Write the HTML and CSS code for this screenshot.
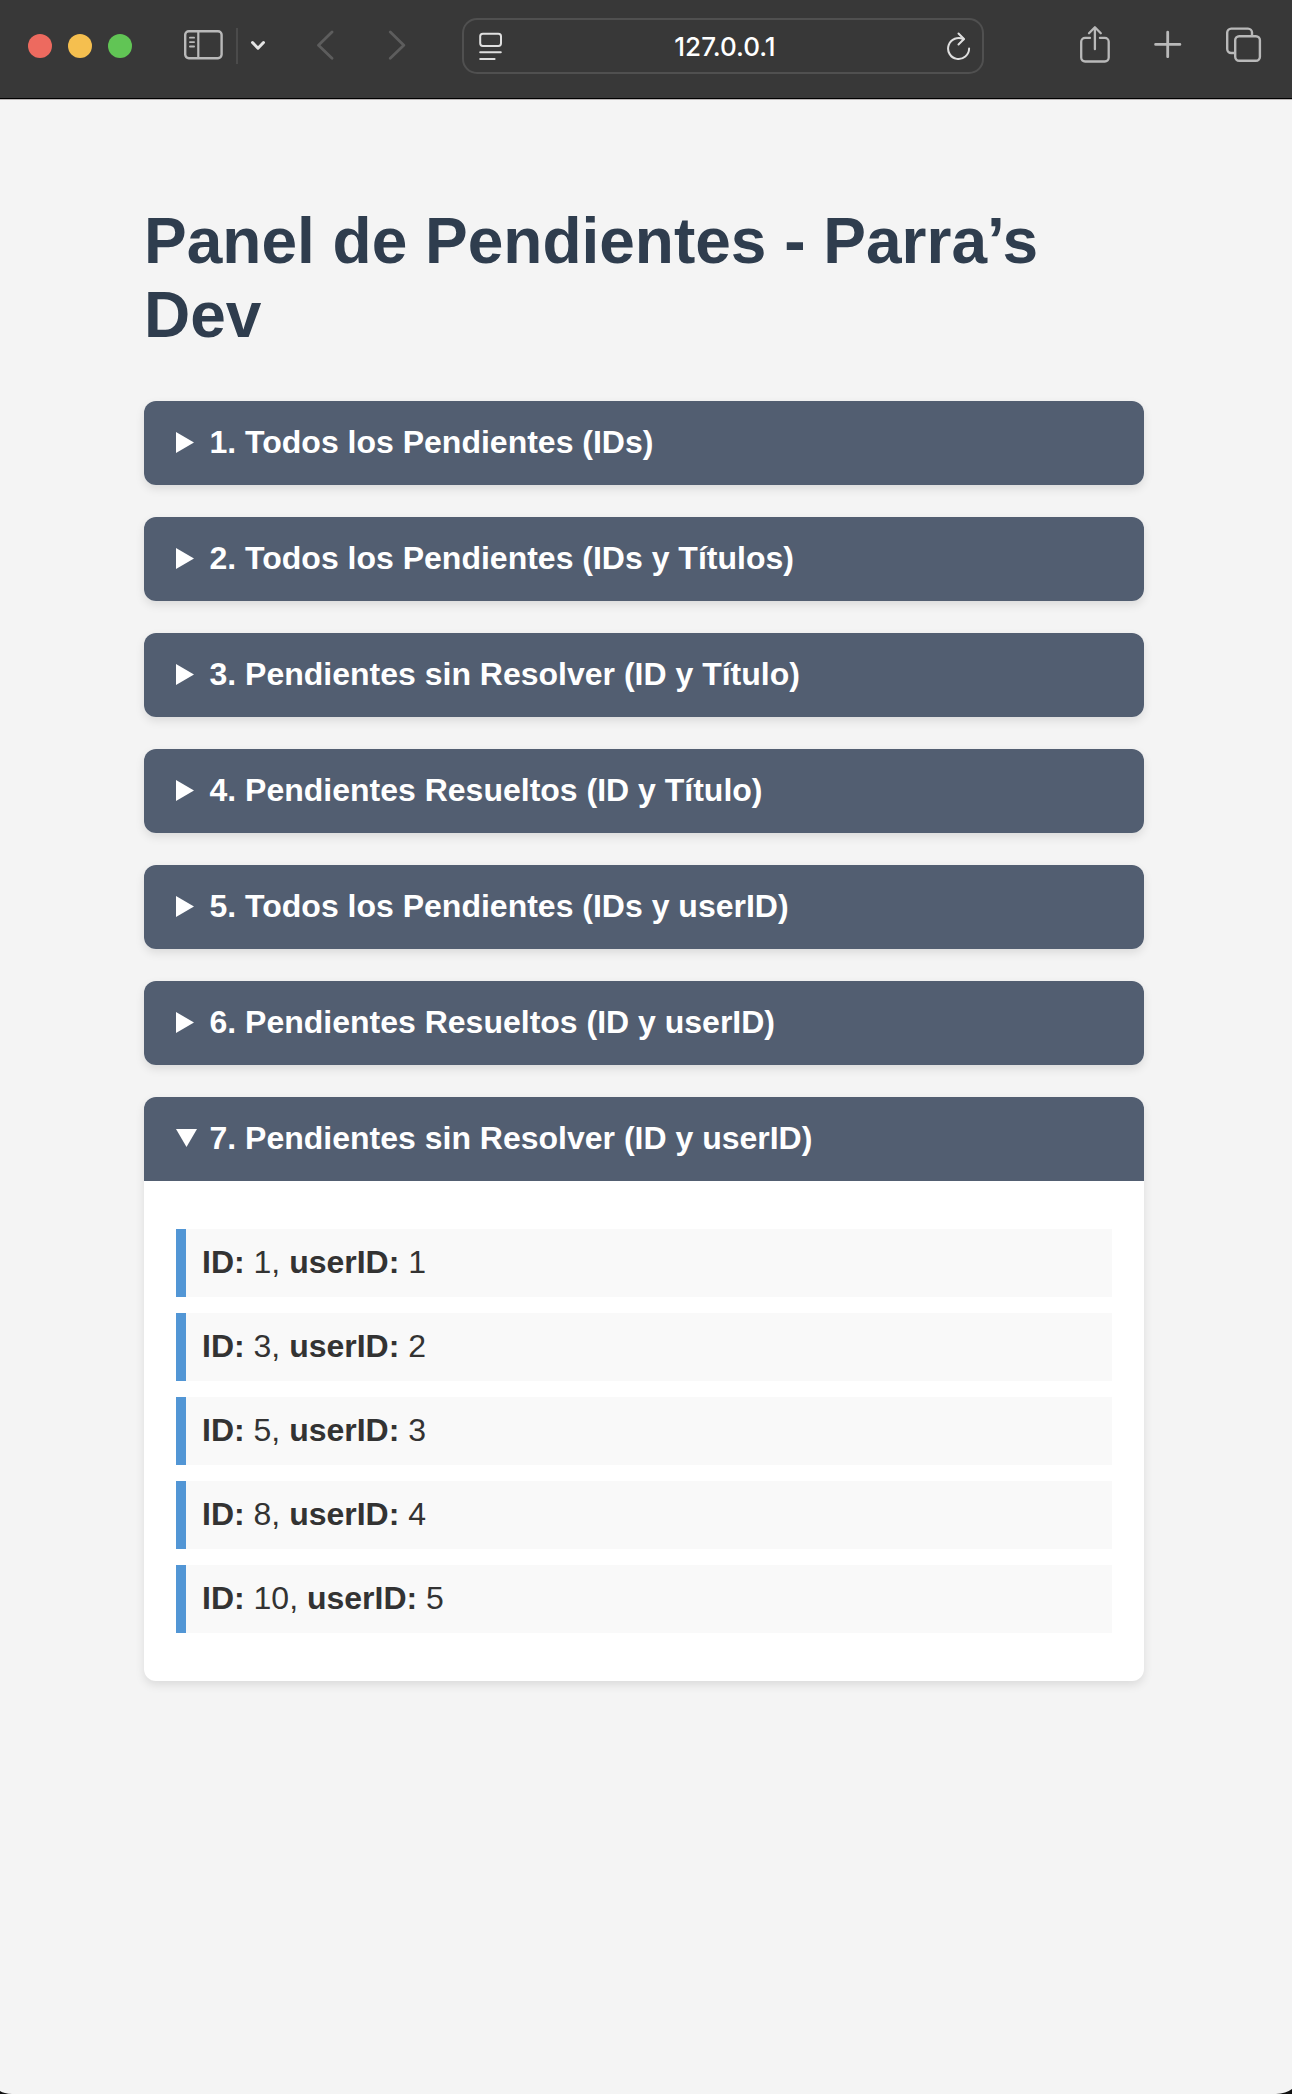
FILE: index.html
```html
<!DOCTYPE html>
<html lang="es">
<head>
<meta charset="utf-8">
<title>Panel de Pendientes</title>
<link rel="stylesheet" href="styles.css">
</head>
<body>
<header class="toolbar">
  <div class="lights"><i class="light red"></i><i class="light yellow"></i><i class="light green"></i></div>
  <svg class="sidebar-icon" width="40" height="32" viewBox="0 0 40 32" fill="none" stroke="#b9b9b9" stroke-width="2.4" stroke-linecap="round"><rect x="2.2" y="2.2" width="36.4" height="27" rx="3.6"/><path d="M15.300 2v27" stroke-width="2.2"/><path d="M6.900 8.700h4.200M6.900 13.100h4.200M6.900 17.500h4.200" stroke-width="1.8"/></svg>
  <span class="divider"></span>
  <svg class="menu-icon" width="16" height="12" viewBox="0 0 16 12" fill="none" stroke="#e4e4e4" stroke-width="3" stroke-linecap="round" stroke-linejoin="round"><path d="M2.5 2.5 8 8.200l5.500-5.700"/></svg>
  <svg class="back-icon" width="18" height="30" viewBox="0 0 18 30" fill="none" stroke="#5d5d5d" stroke-width="2.8" stroke-linecap="round" stroke-linejoin="round"><path d="M16 2 2.5 15.200 16 28.200"/></svg>
  <svg class="forward-icon" width="18" height="30" viewBox="0 0 18 30" fill="none" stroke="#5d5d5d" stroke-width="2.8" stroke-linecap="round" stroke-linejoin="round"><path d="M2.300 2l13.500 13.200L2.300 28.200"/></svg>
  <div class="address">
    <svg width="24" height="30" viewBox="0 0 24 30" fill="none" stroke="#dfdfdf" stroke-width="2" stroke-linecap="round"><rect x="1.2" y="2.700" width="20.8" height="12.200" rx="2.6"/><path d="M1.200 21.300h20.600M1.200 27.900h14.400"/></svg>
    <span class="url">127.0.0.1</span>
    <svg width="24" height="30" viewBox="0 0 24 30" fill="none" stroke="#dfdfdf" stroke-width="2" stroke-linecap="round" stroke-linejoin="round"><path d="M22.100 17.600A10.500 10.500 0 1 1 16.600 8.300"/><path d="M11.500 2.500 17 8 11.500 13.500"/></svg>
  </div>
  <svg class="share-icon" width="32" height="40" viewBox="0 0 32 40" fill="none" stroke="#b9b9b9" stroke-width="2.3" stroke-linecap="round" stroke-linejoin="round"><path d="M11 12.900H6.100A3.900 3.900 0 0 0 2.200 16.800v15.800A3.900 3.900 0 0 0 6.100 36.500h19.700a3.900 3.900 0 0 0 3.900-3.900V16.800a3.900 3.900 0 0 0-3.900-3.900h-4.900"/><path d="M15.900 24.200V2.500M10 8.200l5.900-5.900 5.900 5.900"/></svg>
  <svg class="plus-icon" width="28" height="28" viewBox="0 0 28 28" fill="none" stroke="#b9b9b9" stroke-width="2.8" stroke-linecap="round"><path d="M13.700 2.200v24.500M1.600 14.400h24.300"/></svg>
  <svg class="tabs-icon" width="36" height="36" viewBox="0 0 36 36" fill="none" stroke="#b9b9b9" stroke-width="2.4"><path d="M9 26H5.200a4 4 0 0 1-4-4V5.600a4 4 0 0 1 4-4h16.800a4 4 0 0 1 4 4V9"/><rect x="9.200" y="9.200" width="24.700" height="24.600" rx="4"/></svg>
</header>
<main class="page">
  <h1 class="title">Panel de Pendientes - Parra’s Dev</h1>
  <details class="panel"><summary class="heading"><svg class="marker" viewBox="0 0 22 22"><path d="M0 0v21l18-10.500z"/></svg>1. Todos los Pendientes (IDs)</summary></details>
  <details class="panel"><summary class="heading"><svg class="marker" viewBox="0 0 22 22"><path d="M0 0v21l18-10.500z"/></svg>2. Todos los Pendientes (IDs y Títulos)</summary></details>
  <details class="panel"><summary class="heading"><svg class="marker" viewBox="0 0 22 22"><path d="M0 0v21l18-10.500z"/></svg>3. Pendientes sin Resolver (ID y Título)</summary></details>
  <details class="panel"><summary class="heading"><svg class="marker" viewBox="0 0 22 22"><path d="M0 0v21l18-10.500z"/></svg>4. Pendientes Resueltos (ID y Título)</summary></details>
  <details class="panel"><summary class="heading"><svg class="marker" viewBox="0 0 22 22"><path d="M0 0v21l18-10.500z"/></svg>5. Todos los Pendientes (IDs y userID)</summary></details>
  <details class="panel"><summary class="heading"><svg class="marker" viewBox="0 0 22 22"><path d="M0 0v21l18-10.500z"/></svg>6. Pendientes Resueltos (ID y userID)</summary></details>
  <details class="panel" open><summary class="heading"><svg class="marker" viewBox="0 0 22 22"><path d="M0 1h21L10.500 19z"/></svg>7. Pendientes sin Resolver (ID y userID)</summary>
    <ul class="items">
      <li class="item"><strong>ID:</strong> 1, <strong>userID:</strong> 1</li>
      <li class="item"><strong>ID:</strong> 3, <strong>userID:</strong> 2</li>
      <li class="item"><strong>ID:</strong> 5, <strong>userID:</strong> 3</li>
      <li class="item"><strong>ID:</strong> 8, <strong>userID:</strong> 4</li>
      <li class="item"><strong>ID:</strong> 10, <strong>userID:</strong> 5</li>
    </ul>
  </details>
</main>
<svg class="corner left" width="12" height="3" viewBox="0 0 12 3"><path d="M0 0Q4 2.500 12 3H0z"/></svg>
<svg class="corner right" width="16" height="5" viewBox="0 0 16 5"><path d="M16 0Q10 4.500 0 5h16z"/></svg>
</body>
</html>
```
FILE: styles.css
```css
* { box-sizing: border-box; }
body {
  position: relative;
  margin: 0;
  height: 2094px;
  overflow: hidden;
  background: #f4f4f4;
  color: #333;
  font-family: Arial, "Liberation Sans", sans-serif;
  font-size: 32px;
}
svg { display: block; flex: none; }

.toolbar {
  display: flex;
  align-items: flex-start;
  height: 100px;
  padding-left: 28px;
  background: #383838;
  border-bottom: 1px solid #b9b5b5;
  box-shadow: inset 0 -1px #000;
}
.lights { display: flex; gap: 16px; margin-top: 34px; }
.light { width: 24px; height: 24px; border-radius: 50%; }
.red { background: #ed6a5f; }
.yellow { background: #f5bf4f; }
.green { background: #61c555; }
.sidebar-icon { margin: 29px 0 0 51px; }
.divider { width: 2px; height: 36px; margin: 28px 0 0 13px; background: #4b4b4b; }
.menu-icon { margin: 40px 0 0 12px; }
.back-icon { margin: 30px 0 0 50px; }
.forward-icon { margin: 30px 0 0 54px; }
.address {
  display: flex;
  align-items: center;
  justify-content: space-between;
  width: 522px;
  height: 56px;
  margin: 18px 0 0 56px;
  padding: 0 11px 0 15px;
  border: 2px solid #505050;
  border-radius: 15px;
}
.url { padding-top: 2px; font: 500 26px/30px Inter, sans-serif; color: #fff; }
.share-icon { margin: 25px 0 0 95px; }
.plus-icon { margin: 30px 0 0 43px; }
.tabs-icon { margin: 27px 0 0 44px; }

.page { width: 1000px; margin: 0 auto 0 144px; padding-top: 104px; }
.title { margin: 0 0 49px; color: #2f3d4e; font-size: 64px; line-height: 74px; }
.panel {
  margin-bottom: 32px;
  border-radius: 12px;
  background: #fff;
  box-shadow: 0 4px 10px rgba(0, 0, 0, .1);
  overflow: hidden;
}
.heading {
  display: flex;
  align-items: center;
  height: 84px;
  padding: 0 32px 2px;
  background: #525e71;
  color: #fff;
  font-weight: bold;
  line-height: 36px;
  list-style: none;
}
.marker { width: 22px; height: 22px; margin: 2px 11.5px 0 0; fill: #fff; }
.items { display: grid; gap: 16px; margin: 0; padding: 48px 32px; list-style: none; }
.item {
  height: 68px;
  padding: 15px 16px;
  border-left: 10px solid #5296d5;
  background: #f9f9f9;
  line-height: 36px;
}
.corner { position: absolute; bottom: 0; fill: #111; }
.left { left: 0; }
.right { right: 0; }
```
